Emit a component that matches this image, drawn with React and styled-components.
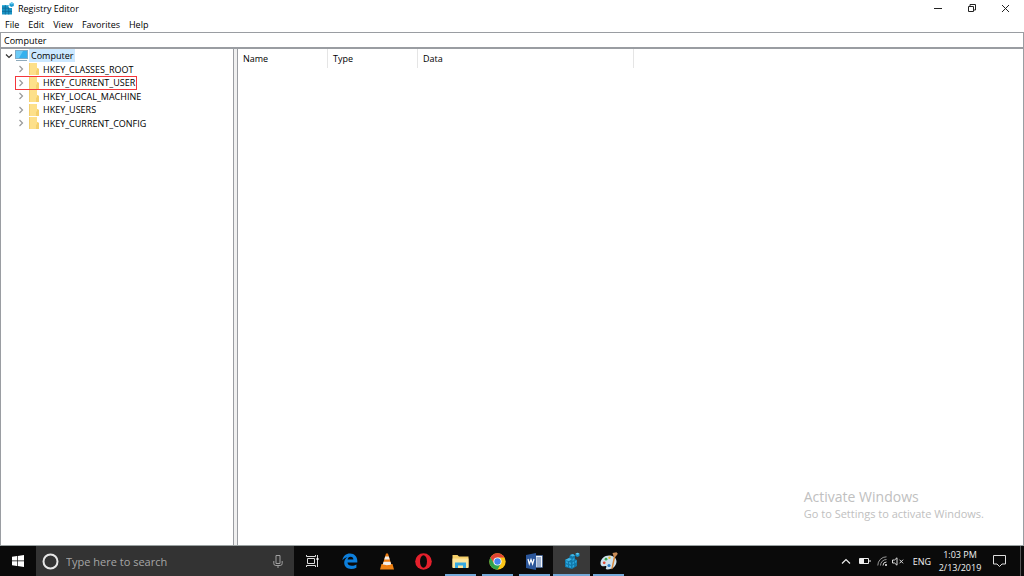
import React from "react";
import styled, { createGlobalStyle, css } from "styled-components";

const ui = `"Open Sans", "Noto Sans", sans-serif`;
const line = "#9a9da2";

const GlobalStyle = createGlobalStyle`
  *, *::before, *::after { box-sizing: border-box; }
  body { margin: 0; background: #fff; font-family: ${ui}; font-size: 9px; color: #000; }
  button, input { font: inherit; color: inherit; border: 0; padding: 0; margin: 0; background: none; outline: 0; }
  svg { display: block; flex: none; }
`;

const Screen = styled.div`
  position: relative;
  min-height: 100vh;
  display: flex;
  flex-direction: column;
`;

const TitleBar = styled.header`
  height: 17px;
  display: flex;
  align-items: center;
  padding: 0 2px 0 1px;
`;

const Title = styled.h1`
  flex: 1;
  margin: 0 0 0 4px;
  font-size: 9px;
  font-weight: 400;
  line-height: 17px;
`;

const WindowButton = styled.button`
  width: 34px;
  height: 17px;
  display: grid;
  place-items: center;
`;

const MenuBar = styled.nav`
  height: 15px;
  display: flex;
  align-items: center;
  gap: 9px;
  padding-left: 5px;
`;

const MenuItem = styled.button`
  line-height: 15px;
`;

const AddressInput = styled.input`
  width: 100%;
  height: 15px;
  && {
    border: 1px solid ${line};
    border-bottom: 0;
    padding: 0 3px;
  }
`;

const Panes = styled.main`
  flex: 1;
  display: flex;
  border-top: 2px solid ${line};
`;

const TreePane = styled.section`
  width: 234px;
  border: solid ${line};
  border-width: 0 1px;
`;

const Splitter = styled.div`
  width: 3px;
  background: #f0f0f0;
`;

const ListPane = styled.section`
  flex: 1;
  border: solid ${line};
  border-width: 0 1px;
`;

const Tree = styled.ul`
  height: 81px;
  margin: 0;
  padding: 0;
  list-style: none;
  display: grid;
  grid-auto-rows: 1fr;
`;

const TreeRow = styled.li`
  display: flex;
  align-items: center;
  justify-self: start;
  margin-left: ${(p) => (p.$child ? 14 : 4)}px;
  ${(p) =>
    p.$marked &&
    css`
      outline: 1px solid #f4363c;
      outline-offset: -1px;
    `}
`;

const Expander = styled.button`
  width: ${(p) => (p.$child ? 14 : 10)}px;
  height: 11px;
  display: grid;
  align-items: center;
  justify-items: start;
  && {
    padding-left: ${(p) => (p.$child ? 2 : 0)}px;
  }
`;

const TreeLabel = styled.button`
  height: 13px;
  line-height: 13px;
  white-space: nowrap;
  && {
    margin-left: ${(p) => (p.$child ? 2 : 1)}px;
    padding: 0 2px;
    background: ${(p) => (p.$selected ? "#cce8ff" : "none")};
  }
`;

const ValueTable = styled.table`
  border-spacing: 0;
  table-layout: fixed;
  width: 396px;
`;

const HeadCell = styled.th`
  width: ${(p) => p.$width}px;
  height: 19px;
  padding: 0 0 0 5px;
  text-align: left;
  font-weight: 400;
  line-height: 18px;
  border-right: 1px solid #e5e5e5;
`;

const Watermark = styled.aside`
  position: absolute;
  right: 40px;
  bottom: 54px;
  color: #c0c0c0;
`;

const WatermarkTitle = styled.p`
  margin: 0;
  font-size: 14px;
  line-height: 18px;
`;

const WatermarkText = styled.p`
  margin: 0;
  font-size: 11px;
  line-height: 16px;
`;

const TaskBar = styled.footer`
  height: 31px;
  display: flex;
  background: #0a0a0a;
  border-top: 1px solid #9aa2a2;
  color: #f2f2f2;
`;

const StartButton = styled.button`
  width: 36px;
  display: grid;
  place-items: center;
`;

const SearchBox = styled.label`
  width: 258px;
  display: flex;
  align-items: center;
  gap: 7px;
  padding: 0 11px 0 6px;
  background: #333;
`;

const SearchInput = styled.input`
  flex: 1;
  min-width: 0;
  && {
    font-size: 11px;
  }
  &::placeholder { color: #a6a6a6; opacity: 1; }
`;

const TaskButton = styled.button`
  position: relative;
  width: 37px;
  display: grid;
  place-items: center;
  && {
    background: ${(p) => (p.$active ? "#393939" : "none")};
  }
  ${(p) =>
    p.$running &&
    css`
      &::after {
        content: "";
        position: absolute;
        inset: auto ${p.$active ? 0 : 3}px 0;
        height: 2px;
        background: #74a9d8;
      }
    `}
`;

const Tray = styled.div`
  margin-left: auto;
  display: flex;
  align-items: center;
`;

const TrayButton = styled.button`
  width: ${(p) => p.$width}px;
  height: 30px;
  display: grid;
  place-items: center;
`;

const Clock = styled.button`
  width: 44px;
  line-height: 13px;
  text-align: center;
  white-space: nowrap;
`;

const ShowDesktop = styled.button`
  width: 4px;
  align-self: stretch;
  && {
    margin-left: 4px;
    border-left: 1px solid #555;
  }
`;

const RegeditSmallIcon = () => (
  <svg width="13" height="13" viewBox="0 0 13 13" aria-hidden="true">
    <path d="M1 3h6.500v3H11v6.500H1z" fill="#1b93c4" />
    <path d="M1 3h6.500v1H1z" fill="#3fb5e0" />
    <path d="M4.300 3v9.500M7.700 5v7.500M1 6.200h7M1 9.400h10" stroke="#0d6c99" strokeWidth=".8" />
    <path d="M8.500 1.500L10.800.3l2 1.200v2.400l-2.300 1.200-2-1.200z" fill="#1d9bd1" />
    <path d="M8.500 1.500L10.800.3l2 1.200-2.200 1z" fill="#6ccbf0" />
  </svg>
);

const RegeditIcon = () => (
  <svg width="17" height="18" viewBox="0 0 17 18" aria-hidden="true">
    <path d="M2 8l4-2 1-3 3-1 2 1.500V7l2 1v6l-5 3-7-2z" fill="#1279ab" />
    <path d="M2 8l4-2 3 1-3 2zM7 3l3-1 2 1.500-2.500 1z" fill="#43b8e6" />
    <path d="M3 9l2 .7v2L3 11zM6 10l2 .7v2L6 12zM3 12.300l2 .7v2l-2-.7zM6 13.200l2 .7v2l-2-.7zM9.500 10.500l1.600-1v2l-1.600 1zM9.500 13.700l1.600-1v2l-1.600 1zM12 9l1.500-.8v2L12 11zM9.500 7l1.800-1v2l-1.800 1z" fill="#2aa5dc" />
    <path d="M12.500 1.700L14.500.7l2 1v2.200l-2 1.100-2-1.100z" fill="#1894cc" />
    <path d="M12.500 1.700l2-1 2 1-2 1z" fill="#62c9ef" />
  </svg>
);

const ComputerIcon = () => (
  <svg width="13" height="12" viewBox="0 0 13 12" aria-hidden="true">
    <rect x=".5" y=".5" width="12" height="8" fill="#35b0ee" stroke="#7cabc9" />
    <path d="M1 1h7L4 8H1z" fill="#6ccbf7" />
    <path d="M1 10.500h11" stroke="#8faabb" />
  </svg>
);

const FolderIcon = () => (
  <svg width="10" height="12" viewBox="0 0 10 12" aria-hidden="true">
    <path d="M0 0h8v5l2 1v6H0z" fill="#fde08a" />
    <path d="M8 5v2l-1 1v4h3V6z" fill="#f4d06c" />
    <path d="M0 0h1v12H0z" fill="#f3cf70" />
  </svg>
);

const Chevron = ({ open }) => (
  <svg width="8" height="8" viewBox="0 0 8 8" fill="none" stroke={open ? "#333" : "#999"} strokeWidth="1.2" aria-hidden="true">
    <path d={open ? "M1 2.5l3 3 3-3" : "M2.5 1l3 3-3 3"} />
  </svg>
);

const EdgeIcon = () => (
  <svg width="16" height="16" viewBox="0 0 16 16" aria-hidden="true">
    <path fill="#0d7fdc" d="M.4 7.2C1 3 4 .5 8 .5c4.600 0 7.300 3.300 7.300 7.300v1.700H5.500c.1 2.300 2 3.300 4.300 3.300 1.700 0 3.200-.5 4.600-1.300v3.200c-1.500.8-3.300 1.200-5.200 1.200-4.300 0-7-2.500-7-6.200 0-2.500 1.300-4.600 3.500-5.800C3.300 4.500 1.600 5.600.4 7.200zm5.200-.6h5.800c0-1.800-1-2.900-2.800-2.900-1.700 0-2.800 1.200-3 2.900z" />
  </svg>
);

const VlcIcon = () => (
  <svg width="16" height="17" viewBox="0 0 16 17" aria-hidden="true">
    <path d="M2.500 11h11l1.500 5.500H1z" fill="#ee8113" />
    <path d="M7 .5h2l3.600 12c-2 1.600-7.200 1.600-9.200 0z" fill="#ef7d10" />
    <path d="M6.200 3.400h3.600l.9 3H5.300zM4.600 8.800h6.800l.8 2.500c-2 1.200-6.400 1.200-8.400 0z" fill="#f0eeec" />
  </svg>
);

const OperaIcon = () => (
  <svg width="17" height="17" viewBox="0 0 17 17" aria-hidden="true">
    <circle cx="8.500" cy="8.500" r="8.300" fill="#e5202c" />
    <ellipse cx="8.500" cy="8.500" rx="3.500" ry="6.200" fill="#0a0a0a" />
  </svg>
);

const ExplorerIcon = () => (
  <svg width="17" height="15" viewBox="0 0 17 15" aria-hidden="true">
    <path d="M.5 1h5l1.500 1.500h9.500V13H.5z" fill="#f5cf68" />
    <path d="M.5 4.500h16V14H.5z" fill="#fce49a" />
    <path d="M3 14V8.500h11V14h-3v-2.500H6V14z" fill="#36a9e0" />
  </svg>
);

const ChromeIcon = () => (
  <svg width="17" height="17" viewBox="0 0 17 17" aria-hidden="true">
    <circle cx="8.500" cy="8.500" r="8.200" fill="#fbc518" />
    <path d="M1.400 4.400a8.200 8.200 0 0 1 14.200 0H8.500l-3.600 6.100z" fill="#e04434" />
    <path d="M1.400 4.400a8.200 8.200 0 0 0 7 12.300l3.600-6.200H5z" fill="#2fa24d" />
    <circle cx="8.500" cy="8.500" r="4.100" fill="#fff" />
    <circle cx="8.500" cy="8.500" r="3.200" fill="#4486ee" />
  </svg>
);

const WordIcon = () => (
  <svg width="17" height="17" viewBox="0 0 17 17" aria-hidden="true">
    <rect x="8" y="2.500" width="8.500" height="12" fill="#f5f7fb" stroke="#2b569a" strokeWidth=".6" />
    <path d="M10.500 5h4.500M10.500 7h4.500M10.500 9h4.500M10.500 11h4.500M10.500 13h4.500" stroke="#2b569a" strokeWidth=".9" />
    <path d="M0 2l10-2v17L0 15z" fill="#2b569a" />
    <path d="M2 6l1.300 5L5 6.500l1.600 4.500L8 6" stroke="#fff" strokeWidth="1.200" fill="none" />
  </svg>
);

const PaintIcon = () => (
  <svg width="18" height="18" viewBox="0 0 18 18" aria-hidden="true">
    <path d="M.5 11.500C.5 7 4.500 3.500 9 3.500c4.500 0 7.500 2.600 7.500 6 0 4.400-4 8-9 8-1.800 0-2-1-1.300-2 .6-1 0-1.800-1.200-1.400-2 .6-4.500 0-4.500-2.600z" fill="#cfe2ee" />
    <circle cx="4.200" cy="10.800" r="1.400" fill="#e0503a" />
    <circle cx="6" cy="7.200" r="1.400" fill="#3ca556" />
    <circle cx="9.500" cy="5.700" r="1.200" fill="#e9bd31" />
    <circle cx="9" cy="13.500" r="1.600" fill="#2f7dc8" />
    <path d="M14 3.500l1.500.6-2.700 12.400-1.600.8z" fill="#d98a3e" />
    <path d="M12.500 1l4-.8 1.300 1.600-2 2.800-2.300-.6z" fill="#c98d58" />
  </svg>
);

const keys = ["HKEY_CLASSES_ROOT", "HKEY_CURRENT_USER", "HKEY_LOCAL_MACHINE", "HKEY_USERS", "HKEY_CURRENT_CONFIG"];

const tasks = [
  { name: "Microsoft Edge", icon: <EdgeIcon /> },
  { name: "VLC media player", icon: <VlcIcon /> },
  { name: "Opera", icon: <OperaIcon /> },
  { name: "File Explorer", icon: <ExplorerIcon />, running: true },
  { name: "Google Chrome", icon: <ChromeIcon />, running: true },
  { name: "Word", icon: <WordIcon />, running: true },
  { name: "Registry Editor", icon: <RegeditIcon />, running: true, active: true },
  { name: "Paint", icon: <PaintIcon />, running: true },
];

export default function App() {
  return (
    <Screen>
      <GlobalStyle />
      <TitleBar>
        <RegeditSmallIcon />
        <Title>Registry Editor</Title>
        <WindowButton aria-label="Minimize">
          <svg width="9" height="9" viewBox="0 0 9 9" stroke="#222"><path d="M1 4.500h8" /></svg>
        </WindowButton>
        <WindowButton aria-label="Restore">
          <svg width="9" height="9" viewBox="0 0 9 9" stroke="#222" fill="none"><path d="M1.500 2.500h5v5h-5zM3 2V.5h5.500V6H7" /></svg>
        </WindowButton>
        <WindowButton aria-label="Close">
          <svg width="9" height="9" viewBox="0 0 9 9" stroke="#222"><path d="M1 1l7 7M8 1L1 8" /></svg>
        </WindowButton>
      </TitleBar>
      <MenuBar aria-label="Menu">
        {["File", "Edit", "View", "Favorites", "Help"].map((m) => (
          <MenuItem key={m}>{m}</MenuItem>
        ))}
      </MenuBar>
      <AddressInput aria-label="Address" defaultValue="Computer" />
      <Panes>
        <TreePane aria-label="Keys">
          <Tree>
            <TreeRow>
              <Expander aria-label="Collapse Computer"><Chevron open /></Expander>
              <ComputerIcon />
              <TreeLabel $selected>Computer</TreeLabel>
            </TreeRow>
            {keys.map((k) => (
              <TreeRow key={k} $child $marked={k === "HKEY_CURRENT_USER"}>
                <Expander $child aria-label={`Expand ${k}`}><Chevron /></Expander>
                <FolderIcon />
                <TreeLabel $child>{k}</TreeLabel>
              </TreeRow>
            ))}
          </Tree>
        </TreePane>
        <Splitter />
        <ListPane aria-label="Values">
          <ValueTable>
            <thead>
              <tr>
                <HeadCell scope="col" $width={90}>Name</HeadCell>
                <HeadCell scope="col" $width={90}>Type</HeadCell>
                <HeadCell scope="col" $width={216}>Data</HeadCell>
              </tr>
            </thead>
          </ValueTable>
        </ListPane>
      </Panes>
      <Watermark>
        <WatermarkTitle>Activate Windows</WatermarkTitle>
        <WatermarkText>Go to Settings to activate Windows.</WatermarkText>
      </Watermark>
      <TaskBar>
        <StartButton aria-label="Start">
          <svg width="12" height="12" viewBox="0 0 12 12" fill="#fff"><path d="M0 1.700l5-.7v4.600H0zM5.700.9L12 0v5.600H5.700zM0 6.300h5v4.600l-5-.7zM5.700 6.300H12V12l-6.300-.9z" /></svg>
        </StartButton>
        <SearchBox>
          <svg width="17" height="17" viewBox="0 0 17 17" fill="none" stroke="#e6e6e6" strokeWidth="2"><circle cx="8.500" cy="8.500" r="7" /></svg>
          <SearchInput aria-label="Search" placeholder="Type here to search" />
          <svg width="10" height="13" viewBox="0 0 10 13" fill="none" stroke="#a0a0a0"><path d="M3 .5h4v8H3zM.8 6v2.500q0 2 2 2h4.400q2 0 2-2V6M5 10.500V13" /></svg>
        </SearchBox>
        <TaskButton aria-label="Task View">
          <svg width="13" height="12" viewBox="0 0 13 12" fill="none" stroke="#ddd"><path d="M1.500 3.500h7v5h-7zM.5 0v1.500h9V0M.5 12v-1.500h9V12M11.500 0v12" /><path d="M10.500 3h2v2h-2z" fill="#fff" stroke="none" /></svg>
        </TaskButton>
        {tasks.map((t) => (
          <TaskButton key={t.name} aria-label={t.name} $running={t.running} $active={t.active}>{t.icon}</TaskButton>
        ))}
        <Tray>
          <TrayButton $width={20} aria-label="Show hidden icons">
            <svg width="10" height="7" viewBox="0 0 10 7" fill="none" stroke="#eee" strokeWidth="1.200"><path d="M1 5.500l4-4 4 4" /></svg>
          </TrayButton>
          <TrayButton $width={18} aria-label="Battery">
            <svg width="12" height="8" viewBox="0 0 12 8" fill="none" stroke="#eee"><path d="M.5 1.500h9v5h-9zM11 3v2" /><path d="M1 2h4v4H1z" fill="#eee" stroke="none" /></svg>
          </TrayButton>
          <TrayButton $width={16} aria-label="Network">
            <svg width="11" height="10" viewBox="0 0 11 10" fill="none" stroke="#999"><path d="M.8 9.500A8.700 8.700 0 0 1 9.500.8M3.500 9.500a6 6 0 0 1 6-6" /><path d="M6 9.500A3.500 3.500 0 0 1 9.500 6" stroke="#ddd" /><circle cx="9" cy="9" r="1" fill="#eee" stroke="none" /></svg>
          </TrayButton>
          <TrayButton $width={16} aria-label="Volume muted">
            <svg width="12" height="9" viewBox="0 0 12 9" fill="none" stroke="#ddd"><path d="M.5 3h2L5 .8v7.400L2.500 6h-2zM7.500 2.700l3.600 3.600M11.100 2.700L7.500 6.300" /></svg>
          </TrayButton>
          <TrayButton $width={32} aria-label="Input language">ENG</TrayButton>
          <Clock>1:03 PM<br />2/13/2019</Clock>
          <TrayButton $width={34} aria-label="Notifications">
            <svg width="13" height="12" viewBox="0 0 13 12" fill="none" stroke="#ddd"><path d="M.5.5h12v8.500H9L6.500 11.500 4 9H.5z" /></svg>
          </TrayButton>
          <ShowDesktop aria-label="Show desktop" />
        </Tray>
      </TaskBar>
    </Screen>
  );
}
